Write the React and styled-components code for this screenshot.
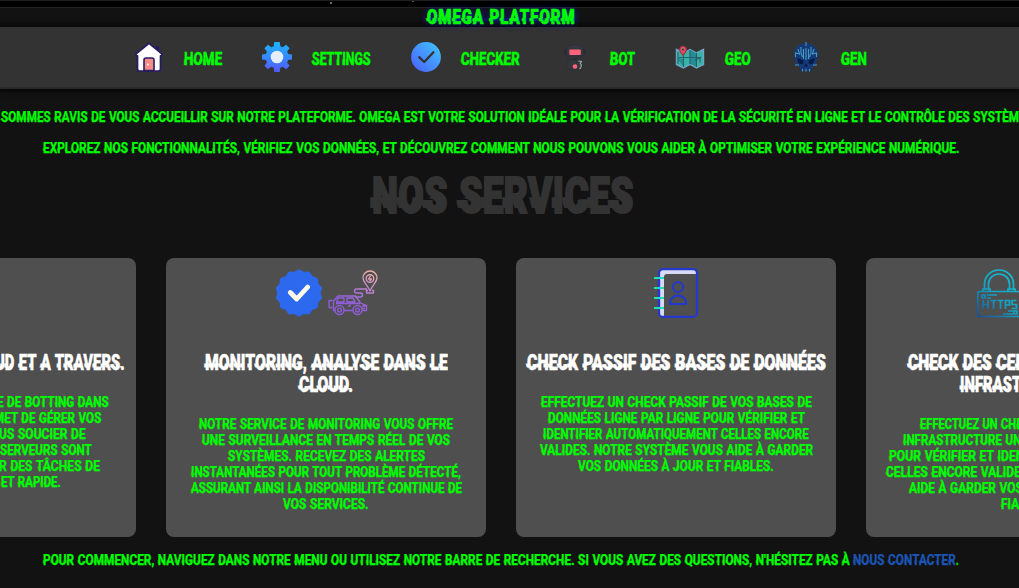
import React, { useLayoutEffect, useRef, useState } from "react";
import styled, { createGlobalStyle } from "styled-components";

const GlobalStyle = createGlobalStyle`
  html, body { margin: 0; background: #121212; overflow: hidden; }
  * { box-sizing: border-box; }
  h1, h2, h3, p { margin: 0; font: inherit; }
  a { text-decoration: none; }
`;

const Page = styled.div`
  width: 1019px;
  height: 588px;
  overflow: hidden;
  background: #121212;
  color: #00ff00;
  font-family: Roboto, "Liberation Sans", sans-serif;
  font-weight: 700;
`;

const Strip = styled.div`
  height: 8px;
  border-top: 1px solid #1c1e20;
  border-bottom: 1px solid #222;
  background: radial-gradient(circle at 331px 2px, #666 1px, transparent 1.5px),
    radial-gradient(circle at 413px 0, #555 1px, transparent 1.5px), #000;
`;

const TitleBar = styled.header`
  height: 19px;
  padding-right: 17px;
  display: flex;
  justify-content: center;
  align-items: flex-start;
  text-shadow: 0 0 8px #2020c8;
`;

const Nav = styled.nav`
  height: 62px;
  padding-right: 19px;
  background: #333;
  border-bottom: 2px solid #292929;
  box-shadow: 0 0 5px 2px #060606;
  display: flex;
  justify-content: center;
  align-items: center;
  gap: 40px;
`;

const NavItem = styled.a`
  display: flex;
  align-items: center;
  gap: 20px;
`;

const NavLabel = styled.span`
  padding-top: 3px;
`;

const NavIcon = styled.svg`
  width: 30px;
  height: 30px;
  flex: none;
`;

const Intro = styled.section`
  padding: 20px 17px 0 0;
  display: flex;
  flex-direction: column;
  align-items: center;
  gap: 15px;
`;

const Heading = styled.div`
  height: 59px;
  margin: 10px 14px 0 0;
  display: flex;
  justify-content: center;
  color: #333;
`;

const Cards = styled.main`
  margin: 33px 17px 0 0;
  display: flex;
  justify-content: center;
  gap: 30px;
`;

const Card = styled.article`
  flex: none;
  width: 320px;
  height: 279px;
  padding-top: 10px;
  background: #4f4f4f;
  border-radius: 8px;
`;

const CardIcons = styled.div`
  height: 50px;
  display: flex;
  justify-content: center;
  gap: 4px;
`;

const CardIcon = styled.svg`
  width: 50px;
  height: 50px;
  flex: none;
`;

const CardTitle = styled.h3`
  margin-top: 34px;
  display: flex;
  flex-direction: column;
  align-items: center;
  color: #fff;
`;

const CardText = styled.p`
  margin-top: 20px;
  display: flex;
  flex-direction: column;
  align-items: center;
`;

const Footer = styled.footer`
  margin: 15px 18px 0 0;
  display: flex;
  justify-content: center;
  color: #00ff00;
`;

const ContactLink = styled.a`
  margin-left: 3px;
  color: #1d55b4;
`;

const LineBox = styled.span`
  display: flex;
  flex: none;
  width: ${(p) => p.$box}px;
  height: ${(p) => p.$line}px;
  line-height: ${(p) => p.$line}px;
  font-size: ${(p) => p.$size}px;
  font-weight: ${(p) => p.$weight};
  letter-spacing: ${(p) => p.$track}px;
  justify-content: ${(p) => (p.$end ? "flex-end" : "flex-start")};
`;

const LineSlot = styled.span`
  display: block;
  width: ${(p) => p.$width}px;
`;

const Glyphs = styled.span`
  display: inline-block;
  position: relative;
  white-space: pre;
  word-spacing: 0.05em;
  transform-origin: 0 50%;
  -webkit-text-stroke: ${(p) => p.$stroke}px currentColor;

  &::after {
    content: attr(data-text);
    position: absolute;
    inset: 0;
    clip-path: inset(52% -4px 30% -4px);
    transform: translateX(${(p) => -p.$shift}px);
    opacity: ${(p) => p.$ghost};
  }
`;

/* One line of display type, condensed horizontally to its measured column. */
function Line({ children, w, box, end, size = 15.5, line = 16, weight = 700, track = 0, shift = 1, ghost = 0.6, stroke = 0.25 }) {
  const ref = useRef(null);
  const [scale, setScale] = useState(1);
  useLayoutEffect(() => {
    setScale(w / ref.current.offsetWidth);
  }, [w, children]);
  return (
    <LineBox $box={box || w} $line={line} $size={size} $weight={weight} $track={track} $end={end}>
      <LineSlot $width={w}>
        <Glyphs ref={ref} data-text={children} $shift={shift} $ghost={ghost} $stroke={stroke} style={{ transform: `scaleX(${scale})` }}>
          {children}
        </Glyphs>
      </LineSlot>
    </LineBox>
  );
}

const HomeIcon = () => (
  <NavIcon viewBox="0 0 30 30">
    <path d="M22 4h3v7h-3z" fill="#241c66" />
    <path d="M15 1.3 1.8 12.2l.8 1.6h.9V27q0 2 2 2h19q2 0 2-2V13.800h1l.7-1.6Z" fill="#fff" stroke="#241c66" strokeWidth="1.7" strokeLinejoin="round" />
    <path d="M10 28.500V18q0-2 2-2h6q2 0 2 2v10.500Z" fill="#f88c88" stroke="#241c66" strokeWidth="1.600" />
    <circle cx="14" cy="22.500" r="1" fill="#fff" />
  </NavIcon>
);

const GearIcon = () => (
  <NavIcon viewBox="0 0 30 30">
    <defs>
      <linearGradient id="gear" x1="0" y1="0" x2="0" y2="1">
        <stop stopColor="#18b8ff" />
        <stop offset="1" stopColor="#5558ff" />
      </linearGradient>
    </defs>
    <path d="M12.300 0h5.400l.6 4.200 2.500 1 3.300-2.500 3.500 3.500-2.500 3.300 1 2.500 4 .5v5l-4 .5-1 2.500 2.500 3.300-3.500 3.500-3.300-2.500-2.500 1-.6 4.200h-5.400l-.6-4.200-2.500-1-3.300 2.500-3.500-3.500 2.500-3.300-1-2.500-4-.5v-5l4-.5 1-2.500-2.500-3.300 3.500-3.500 3.300 2.500 2.500-1Z" fill="url(#gear)" />
    <circle cx="15" cy="15" r="6.300" fill="#e3efff" />
  </NavIcon>
);

const CheckIcon = () => (
  <NavIcon viewBox="0 0 30 30">
    <defs>
      <linearGradient id="check" x1="0" y1="1" x2="1" y2="0">
        <stop stopColor="#4b5cff" />
        <stop offset="1" stopColor="#3fc8ff" />
      </linearGradient>
    </defs>
    <circle cx="15" cy="15" r="14.900" fill="url(#check)" />
    <path d="m8.200 15.200 5 4.800 9.200-9.700" fill="none" stroke="#333" strokeWidth="2.300" strokeLinecap="round" strokeLinejoin="round" />
  </NavIcon>
);

const BotIcon = () => (
  <NavIcon viewBox="0 0 30 30">
    <path d="M6.500 7q1-4.500 8.500-4.500T23.500 7v5q0 2-2 2h-13q-2 0-2-2Z" fill="#34373d" stroke="#2b2f38" />
    <path d="M5.500 7v6M24.500 7v6M13 17h4" stroke="#272c38" strokeWidth="1.800" />
    <rect x="9.300" y="7.500" width="11.500" height="5.500" rx="1" fill="#ff647a" />
    <path d="M8 18h14v7q0 3-3 3h-8q-3 0-3-3Z" fill="#33363b" stroke="#2b2f38" />
    <circle cx="15" cy="24.500" r="2.300" fill="#ff647a" />
    <path d="m18.500 19 3 .5-1.500 2.500m-.5 5q2.500-2 1.500-5" fill="none" stroke="#a9adb1" strokeWidth="1.100" />
  </NavIcon>
);

const MapIcon = () => (
  <NavIcon viewBox="0 0 30 30">
    <path d="m1.500 7.500 7 3.500 6.500-3.500 6.500 3.500 7-3.500V22.500l-7 3.500-6.500-3.500-6.500 3.500-7-3.500Z" fill="#35b4a4" stroke="#70a5c5" strokeWidth="1.400" />
    <path d="m15 8 6.500 3.500V25L15 21.500ZM2 16l6.500 9V17Z" fill="#258e93" />
    <path d="M8.500 11v14M15 8v14M21.500 11v14M4 15.500h22M20 18.500l5-3v5M3 10v12" fill="none" stroke="#285e70" strokeWidth="1.100" />
    <path d="M8 13.500Q4.500 10 4.500 7.500a3.500 3.500 0 0 1 7 0Q11.500 10 8 13.500Z" fill="#df4155" stroke="#873641" />
    <circle cx="8" cy="7.500" r="1.500" fill="#472d3f" stroke="#f0899b" strokeWidth=".6" />
  </NavIcon>
);

const SkullIcon = () => (
  <NavIcon viewBox="0 0 30 30">
    <path d="M15 1Q5 2 3.300 10v6l2 5-1 2 4 1 1.700 5h10l1.700-5 4-1-1-2 2-5v-6Q25 2 15 1Z" fill="#163978" />
    <path d="m6.500 16 6 2.500-.5 3.500q-6 1-5.500-6ZM23.500 16l-6 2.500.5 3.500q6 1 5.500-6ZM15 21l-2 3.500h4Z" fill="#071b45" />
    <path d="M15 0v4M15 6v12M12.500 7v10M17.500 7v10M10 5v6l1.500 4M20 5v6l-1.500 4M7 7l1.500 5-4-1v4M23 7l-1.500 5 4-1v4M4 23h4M22 23h4M11.500 27v2.500M15 27v2.500M18.500 27v2.500" fill="none" stroke="#459bc4" strokeWidth="1.100" />
  </NavIcon>
);

const badgePoints = Array.from({ length: 28 }, (_, i) => {
  const a = (i * Math.PI) / 14 - Math.PI / 2;
  const r = i % 2 ? 21.200 : 23.300;
  return `${25 + r * Math.cos(a)},${25 + r * Math.sin(a)}`;
}).join(" ");

const BadgeIcon = () => (
  <CardIcon viewBox="0 0 50 50">
    <polygon points={badgePoints} fill="#2d69ee" stroke="#2d69ee" strokeWidth="1" strokeLinejoin="round" />
    <path d="m16.300 24.500 6.400 6.500 11-12" fill="none" stroke="#fff9e9" strokeWidth="4.800" strokeLinecap="round" strokeLinejoin="round" />
  </CardIcon>
);

const TrackingIcon = () => (
  <CardIcon viewBox="0 0 50 50">
    <defs>
      <linearGradient id="track" gradientUnits="userSpaceOnUse" x1="42" y1="3" x2="25" y2="37">
        <stop stopColor="#efb0a6" />
        <stop offset=".6" stopColor="#b277db" />
        <stop offset="1" stopColor="#8f5cda" />
      </linearGradient>
    </defs>
    <g fill="none" stroke="url(#track)" strokeWidth="1.350" strokeLinejoin="round">
      <path d="M42 23c-3-7-7-9-7-13a7 7 0 0 1 14 0c0 4-4 6-7 13Z" />
      <circle cx="42" cy="10.500" r="3.800" />
      <path d="m42.500 8-2 3h3l-2 2.500M40 22.500h-1.500v2.500h7V22.500H44M39 21H28.500q-2 0-2 2t2 2h4q2 0 2 2t-2 2H27" />
      <path d="M7 42.500H5.500V33L10 28h17.500l5 7 6 2.500V42.500H34M16 42.500h9M4.500 32.500H1v7h3.500M8 35.500h24M10 30l-1.500 4h7.500v-4ZM19 30v4h8l-2-4ZM22 36v2h-2M34 38h4M34 40.500h3" />
      <circle cx="11.500" cy="42" r="4.500" /><circle cx="11.500" cy="42" r="1.900" />
      <circle cx="29.500" cy="42" r="4.500" /><circle cx="29.500" cy="42" r="1.900" />
    </g>
  </CardIcon>
);

const BookIcon = () => (
  <CardIcon viewBox="0 0 50 50">
    <path d="M8 48V5q0-3 3-3h34v4H16q-3 0-3 3v39Z" fill="#d8dbf5" />
    <rect x="8" y="1.100" width="38" height="47.800" rx="4" fill="none" stroke="#2439cc" strokeWidth="2.200" />
    <path d="M3 10h10M3 20h10M3 30h10M3 40h10" stroke="#20e0b8" strokeWidth="2" />
    <path d="M8 12v6M8 22v6M8 32v6" stroke="#2439cc" strokeWidth="2.200" />
    <g fill="none" stroke="#2439cc" strokeWidth="2.200">
      <circle cx="27" cy="19" r="5" />
      <path d="M19 36v-1.500a8 6.800 0 0 1 16 0V36Z" strokeLinejoin="round" />
    </g>
  </CardIcon>
);

const HttpsIcon = () => (
  <CardIcon viewBox="0 0 50 50">
    <defs>
      <linearGradient id="https" gradientUnits="userSpaceOnUse" x1="4" y1="49" x2="40" y2="5">
        <stop stopColor="#174d9c" />
        <stop offset=".5" stopColor="#13a5c5" />
        <stop offset="1" stopColor="#13bfd7" />
      </linearGradient>
    </defs>
    <g fill="none" stroke="url(#https)" strokeWidth="1.700">
      <rect x="3.800" y="23.500" width="42.500" height="25" rx="2" />
      <path d="M10.500 22V16a14.500 14 0 0 1 29 0v6M14.500 22V16a10.500 10 0 0 1 21 0v6M9 23v-2h7v2M34 23v-2h7v2" />
      <path d="M8 27h3v3H8zM13 27h10M13 30h4M40 43h3v3h-3zM29 46h10M34 43h5" />
      <path d="M9 32v9M14 32v9M9 36.500h5M16.500 32.500h6M19.500 32v9M23.500 32.500h6M26.500 32v9M31.500 41v-8.500h4v4.500h-4M42.500 32.500h-4.500v4h4.500v4H37.500" />
    </g>
  </CardIcon>
);

const ServerIcon = () => (
  <CardIcon viewBox="0 0 50 50">
    <rect x="5" y="8" width="40" height="14" rx="2" fill="none" stroke="#13a5c5" strokeWidth="2" />
    <rect x="5" y="28" width="40" height="14" rx="2" fill="none" stroke="#174d9c" strokeWidth="2" />
  </CardIcon>
);

const menu = [
  [HomeIcon, "HOME", 38],
  [GearIcon, "SETTINGS", 59],
  [CheckIcon, "CHECKER", 59],
  [BotIcon, "BOT", 25],
  [MapIcon, "GEO", 26],
  [SkullIcon, "GEN", 26],
];

/* Each text row: [text, column width, optional width of the drawn part]. */
const services = [
  {
    icons: [ServerIcon],
    title: [["UD ET A TRAVERS.", 298, 130]],
    text: [
      ["E DE BOTTING DANS", 266, 112],
      ["MET DE GÉRER VOS", 250, 107],
      ["US SOUCIER DE", 220, 87],
      ["SERVEURS SONT", 232, 92],
      ["R DES TÂCHES DE", 248, 101],
      ["ET RAPIDE.", 170, 60],
    ],
  },
  {
    icons: [BadgeIcon, TrackingIcon],
    title: [["MONITORING, ANALYSE DANS LE", 243], ["CLOUD.", 54]],
    text: [
      ["NOTRE SERVICE DE MONITORING VOUS OFFRE", 254],
      ["UNE SURVEILLANCE EN TEMPS RÉEL DE VOS", 248],
      ["SYSTÈMES. RECEVEZ DES ALERTES", 197],
      ["INSTANTANÉES POUR TOUT PROBLÈME DÉTECTÉ,", 270],
      ["ASSURANT AINSI LA DISPONIBILITÉ CONTINUE DE", 271],
      ["VOS SERVICES.", 86],
    ],
  },
  {
    icons: [BookIcon],
    title: [["CHECK PASSIF DES BASES DE DONNÉES", 299]],
    text: [
      ["EFFECTUEZ UN CHECK PASSIF DE VOS BASES DE", 271],
      ["DONNÉES LIGNE PAR LIGNE POUR VÉRIFIER ET", 257],
      ["IDENTIFIER AUTOMATIQUEMENT CELLES ENCORE", 266],
      ["VALIDES. NOTRE SYSTÈME VOUS AIDE À GARDER", 273],
      ["VOS DONNÉES À JOUR ET FIABLES.", 196],
    ],
  },
  {
    icons: [HttpsIcon, ServerIcon],
    title: [["CHECK DES CERTIFICATS SUR L'", 236], ["INFRASTRUCTURE.", 132]],
    text: [
      ["EFFECTUEZ UN CHECK PASSIF DE VOTRE", 212],
      ["INFRASTRUCTURE UN CERTIFICAT PAR LIGNE", 246],
      ["POUR VÉRIFIER ET IDENTIFIER LES CERTIFICATS", 274],
      ["CELLES ENCORE VALIDES. NOTRE SYSTÈME VOUS", 280],
      ["AIDE À GARDER VOS DONNÉES À JOUR ET", 234],
      ["FIABLES.", 50],
    ],
  },
];

export default function App() {
  return (
    <Page>
      <GlobalStyle />
      <Strip />
      <TitleBar>
        <h1>
          <Line w={149} size={19.5} line={19} weight={900} track={1.2} ghost={1} shift={1.5} stroke={0.7}>OMEGA PLATFORM</Line>
        </h1>
      </TitleBar>
      <Nav>
        {menu.map(([Icon, label, w]) => (
          <NavItem key={label}>
            <Icon />
            <NavLabel>
              <Line w={w} size={18.5} line={32} ghost={0.8} stroke={0.3}>{label}</Line>
            </NavLabel>
          </NavItem>
        ))}
      </Nav>
      <Intro>
        <Line w={1018} box={1000}>
          SOMMES RAVIS DE VOUS ACCUEILLIR SUR NOTRE PLATEFORME. OMEGA EST VOTRE SOLUTION IDÉALE POUR LA VÉRIFICATION DE LA SÉCURITÉ EN LIGNE ET LE CONTRÔLE DES SYSTÈM
        </Line>
        <Line w={916}>
          EXPLOREZ NOS FONCTIONNALITÉS, VÉRIFIEZ VOS DONNÉES, ET DÉCOUVREZ COMMENT NOUS POUVONS VOUS AIDER À OPTIMISER VOTRE EXPÉRIENCE NUMÉRIQUE.
        </Line>
      </Intro>
      <Heading>
        <h2>
          <Line w={262} size={50} line={60} weight={900} shift={4} ghost={1} stroke={2} track={0.5}>NOS SERVICES</Line>
        </h2>
      </Heading>
      <Cards>
        {services.map((s, n) => (
          <Card key={n}>
            <CardIcons>
              {s.icons.map((Icon, i) => <Icon key={i} />)}
            </CardIcons>
            <CardTitle>
              {s.title.map(([t, box, w]) => (
                <Line key={t} w={w || box} box={box} end={!!w} size={22} line={22} weight={900} shift={2} ghost={1} stroke={0.4}>{t}</Line>
              ))}
            </CardTitle>
            <CardText>
              {s.text.map(([t, box, w]) => (
                <Line key={t} w={w || box} box={box} end={!!w}>{t}</Line>
              ))}
            </CardText>
          </Card>
        ))}
      </Cards>
      <Footer>
        <Line w={807}>
          POUR COMMENCER, NAVIGUEZ DANS NOTRE MENU OU UTILISEZ NOTRE BARRE DE RECHERCHE. SI VOUS AVEZ DES QUESTIONS, N'HÉSITEZ PAS À
        </Line>
        <ContactLink><Line w={103}>NOUS CONTACTER</Line></ContactLink>
        <Line w={3}>.</Line>
      </Footer>
    </Page>
  );
}
